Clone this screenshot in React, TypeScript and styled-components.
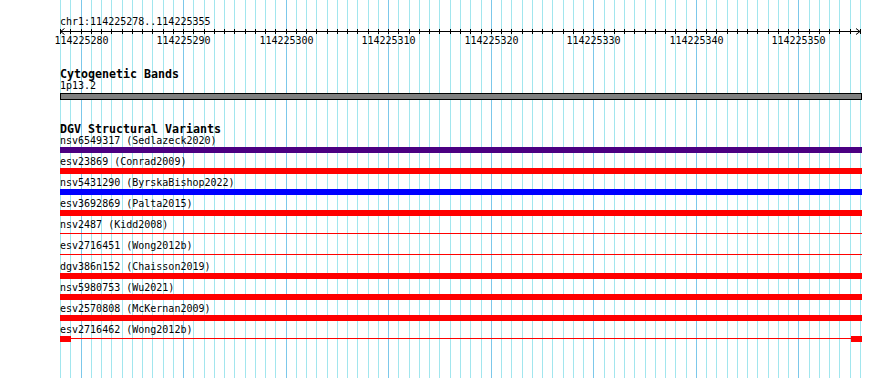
import React from "react";
import styled, { createGlobalStyle } from "styled-components";

const Global = createGlobalStyle`
  html, body { margin: 0; padding: 0; background: #ffffff; }
  body { font-family: "DejaVu Sans Mono", "Liberation Mono", monospace; color: #000; }
`;

const START = 114225278;
const END = 114225356;
const LEFT = 60;
const SPAN = 800;
const TRACK_W = 802;
const STEPS = END - START; // 78
const PANEL_W = 890;
const PANEL_H = 378;

const xAt = (i: number) => Math.round(LEFT + (i * SPAN) / STEPS);
const isMajor = (i: number) => (START + i) % 10 === 0;

type Feature = {
  name: string;
  study: string;
  kind: "bar" | "line" | "ends";
  color: string;
};

const features: Feature[] = [
  { name: "nsv6549317", study: "Sedlazeck2020", kind: "bar", color: "#4b0082" },
  { name: "esv23869", study: "Conrad2009", kind: "bar", color: "#ff0000" },
  { name: "nsv5431290", study: "ByrskaBishop2022", kind: "bar", color: "#0000ff" },
  { name: "esv3692869", study: "Palta2015", kind: "bar", color: "#ff0000" },
  { name: "nsv2487", study: "Kidd2008", kind: "line", color: "#ff0000" },
  { name: "esv2716451", study: "Wong2012b", kind: "line", color: "#ff0000" },
  { name: "dgv386n152", study: "Chaisson2019", kind: "bar", color: "#ff0000" },
  { name: "nsv5980753", study: "Wu2021", kind: "bar", color: "#ff0000" },
  { name: "esv2570808", study: "McKernan2009", kind: "bar", color: "#ff0000" },
  { name: "esv2716462", study: "Wong2012b", kind: "ends", color: "#ff0000" },
];

const Panel = styled.div`
  position: relative;
  width: ${PANEL_W}px;
  height: ${PANEL_H}px;
  overflow: hidden;
  background: #ffffff;
`;

const GridLayer = styled.svg`
  position: absolute;
  left: 0;
  top: 0;
  z-index: 0;
`;

const Tracks = styled.div`
  position: relative;
  z-index: 1;
  display: flex;
  flex-direction: column;
  width: ${TRACK_W}px;
  padding: 15px 0 0 ${LEFT}px;
`;

const Text = styled.div<{ $lh?: number }>`
  font-family: "DejaVu Sans Mono", "Liberation Mono", monospace;
  font-size: 10px;
  line-height: ${(p) => p.$lh ?? 12}px;
  height: ${(p) => p.$lh ?? 12}px;
  white-space: pre;
`;

const TrackTitle = styled.div<{ $mt: number }>`
  font-family: "DejaVu Sans Mono", "Liberation Mono", monospace;
  font-weight: bold;
  font-size: 11.63px;
  line-height: 12px;
  height: 12px;
  margin-top: ${(p) => p.$mt}px;
  white-space: pre;
`;

const Axis = styled.svg`
  display: block;
  overflow: visible;
  font-family: "DejaVu Sans Mono", "Liberation Mono", monospace;
  font-size: 10px;
`;

const BandBar = styled.div`
  box-sizing: border-box;
  margin-top: 1px;
  width: ${TRACK_W}px;
  height: 7px;
  background: #808080;
  border: 1px solid #000000;
`;

const Row = styled.div`
  display: flex;
  flex-direction: column;
  height: 21px;
`;

const Lane = styled.div`
  display: flex;
  align-items: flex-start;
  margin-top: 1px;
  width: ${TRACK_W}px;
  height: 6px;
`;

const Bar = styled.div<{ $color: string }>`
  flex: 1;
  height: 6px;
  background: ${(p) => p.$color};
`;

const Connector = styled.div<{ $color: string }>`
  flex: 1;
  height: 1px;
  margin-top: 2px;
  background: ${(p) => p.$color};
`;

const EndBox = styled.div<{ $color: string }>`
  width: 11px;
  height: 6px;
  background: ${(p) => p.$color};
`;

const Grid: React.FC = () => {
  const lines = [];
  for (let i = 0; i <= STEPS; i++) {
    const x = xAt(i) + 0.5;
    lines.push(
      <line
        key={i}
        x1={x}
        x2={x}
        y1={0}
        y2={PANEL_H}
        stroke={isMajor(i) ? "#7cc8ea" : "#a2e6ee"}
        strokeWidth={1}
      />
    );
  }
  return (
    <GridLayer width={PANEL_W} height={PANEL_H}>
      {lines}
    </GridLayer>
  );
};

const Ruler: React.FC = () => {
  const ticks = [];
  const labels = [];
  for (let i = 0; i <= STEPS; i++) {
    const x = xAt(i) - LEFT + 0.5;
    ticks.push(<line key={i} x1={x} x2={x} y1={1} y2={6} stroke="#000" strokeWidth={1} />);
    if (isMajor(i)) {
      labels.push(
        <text key={`l${i}`} x={x} y={15.5} textAnchor="middle" fill="#000">
          {START + i}
        </text>
      );
    }
  }
  const end = xAt(STEPS) - LEFT;
  return (
    <Axis width={TRACK_W} height={20}>
      <line x1={0} x2={end} y1={3.5} y2={3.5} stroke="#000" strokeWidth={1} />
      <polyline points="4.5,0.5 0.5,3.5 4.5,6.5" fill="none" stroke="#000" strokeWidth={1} />
      <polyline
        points={`${end - 4},0.5 ${end},3.5 ${end - 4},6.5`}
        fill="none"
        stroke="#000"
        strokeWidth={1}
      />
      {ticks}
      {labels}
    </Axis>
  );
};

const FeatureRow: React.FC<{ f: Feature }> = ({ f }) => (
  <Row>
    <Text $lh={11}>{`${f.name} (${f.study})`}</Text>
    <Lane>
      {f.kind === "bar" && <Bar $color={f.color} />}
      {f.kind === "line" && <Connector $color={f.color} />}
      {f.kind === "ends" && (
        <>
          <EndBox $color={f.color} />
          <Connector $color={f.color} />
          <EndBox $color={f.color} />
        </>
      )}
    </Lane>
  </Row>
);

export default function App() {
  return (
    <>
      <Global />
      <Panel>
        <Grid />
        <Tracks>
          <Text $lh={13}>chr1:114225278..114225355</Text>
          <Ruler />
          <TrackTitle $mt={20}>Cytogenetic Bands</TrackTitle>
          <Text>1p13.2</Text>
          <BandBar />
          <TrackTitle $mt={23}>DGV Structural Variants</TrackTitle>
          {features.map((f) => (
            <FeatureRow key={f.name + f.study} f={f} />
          ))}
        </Tracks>
      </Panel>
    </>
  );
}
